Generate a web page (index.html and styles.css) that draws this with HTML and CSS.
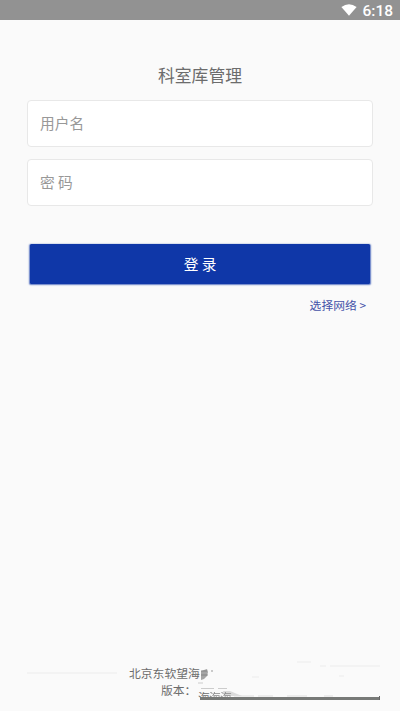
FILE: index.html
```html
<!DOCTYPE html>
<html lang="zh-CN">
<head>
<meta charset="utf-8">
<title>科室库管理</title>
<link rel="stylesheet" href="styles.css">
</head>
<body>
<header class="status">
  <svg class="wifi" width="16" height="12" viewBox="0 0 16 12"><path d="M.4 3.1Q8-2.7 15.6 3.1L8 11.8Z" fill="#fff"/></svg>
  <span class="clock">6:18</span>
</header>
<main class="login">
  <h1 class="title">科室库管理</h1>
  <div class="field">用户名</div>
  <div class="field">密 码</div>
  <div class="submit">登 录</div>
  <div class="network">选择网络 &gt;</div>
</main>
<footer class="footer">
  <div class="rule"></div>
  <div class="company">北京东软望海</div>
  <div class="version">版本：</div>
  <svg class="smudge" width="202" height="46" viewBox="0 0 202 46">
    <defs>
      <filter id="soft" x="-20%" y="-40%" width="140%" height="180%"><feGaussianBlur stdDeviation=".7"/></filter>
      <clipPath id="cut"><path d="M0 30h202v9H0z"/></clipPath>
    </defs>
    <g filter="url(#soft)" fill="none">
      <path d="M3 12l6-2 1 3-1 4-3 3-3 1z" fill="#888" opacity=".75"/>
      <path d="M3 12h6M3 16h7" stroke="#777" opacity=".7"/>
      <path d="M13 12h2" stroke="#999"/>
      <path d="M0 24h5M3 29.500h13M20 29.500h9" stroke="#ccc"/>
      <path d="M25 32h7l12 5H26z" fill="#bbb" opacity=".5"/>
      <path d="M36 37h20M60 37h15M89 37h20M126 37h9" stroke="#ddd"/>
      <path d="M99 3h14M122 7h6M132 7h50M141 17h5M54 18h7" stroke="#f3f3f3" stroke-width="2"/>
    </g>
    <g clip-path="url(#cut)" font-size="11.8" fill="#6c6c6c">
      <text x="0" y="43">海</text>
      <text x="11" y="43" opacity=".8">海</text>
      <text x="22" y="43" opacity=".7">海</text>
    </g>
    <path d="M2 38h180v3H2z" fill="#777977"/>
    <path d="M181 37h1v4h-1z" fill="#666"/>
  </svg>
</footer>
</body>
</html>
```
FILE: styles.css
```css
* { box-sizing: border-box; }
body {
  margin: 0;
  height: 711px;
  display: flex;
  flex-direction: column;
  overflow: hidden;
  background: #fafafa;
  font-family: "Noto Sans CJK SC", sans-serif;
}
.status {
  height: 20px;
  padding: 1px 7px 0 0;
  display: flex;
  align-items: center;
  justify-content: flex-end;
  background: #929292;
  color: #fff;
}
.wifi { margin: -2px 5px 0 0; }
.clock {
  font: 500 15.5px/20px Roboto, sans-serif;
}
.login {
  flex: 1;
  padding: 43px 27px 0;
}
.title {
  margin: 0 0 12px;
  font-size: 16.8px;
  line-height: 25px;
  font-weight: 400;
  text-align: center;
  color: #6c6c6c;
}
.field {
  height: 47px;
  margin-bottom: 12px;
  padding-left: 12px;
  border: 1px solid #e8e8e8;
  border-radius: 4px;
  background: #fff;
  font-size: 14.7px;
  line-height: 43px;
  color: #989898;
}
.submit {
  height: 40px;
  margin: 38.4px 3px 0;
  border-radius: 1.5px;
  background: #0f37a8;
  box-shadow: 0 .5px 1.5px .3px #0f37a8aa;
  color: #fff;
  font-size: 14.7px;
  line-height: 40px;
  text-align: center;
}
.network {
  margin: 10.6px 7px 0 0;
  font-size: 11.8px;
  line-height: 20px;
  text-align: right;
  color: #4452a8;
}
.footer {
  position: relative;
  height: 46px;
  padding-left: 27px;
  display: grid;
  grid-template-columns: 90px 1fr;
  grid-template-rows: 16px 17px;
  font-size: 11.8px;
  line-height: 16px;
  color: #6c6c6c;
}
.rule {
  height: 2px;
  margin-top: 7px;
  background: #f3f3f3;
}
.company { padding-left: 12px; }
.version { grid-column: 2; padding: 1px 0 0 44px; }
.smudge {
  position: absolute;
  left: 198px;
  top: -6px;
}
```
